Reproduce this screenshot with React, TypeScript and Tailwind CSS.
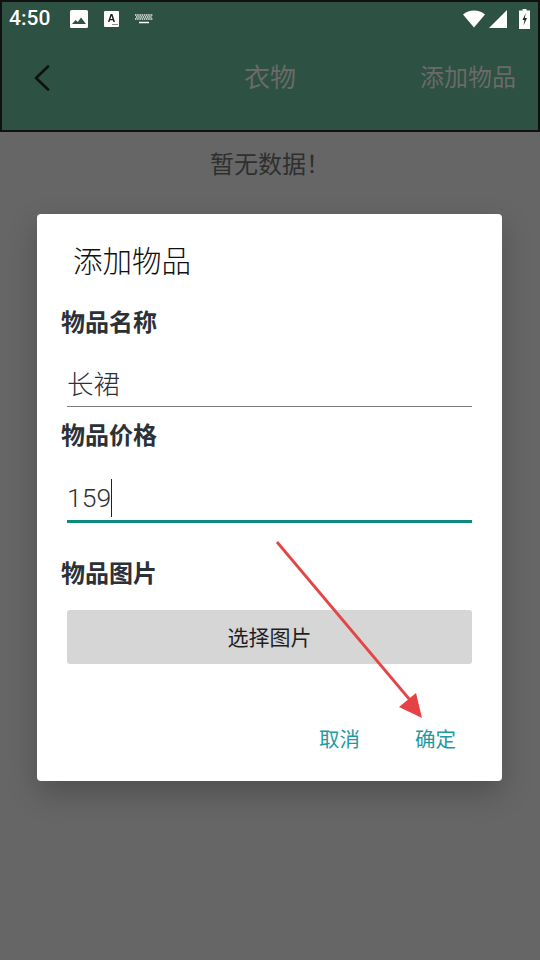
const FONT = "font-['Roboto','Noto_Sans_CJK_SC',sans-serif]"

function StatusBar() {
  return (
    <div className="flex h-[33px] items-center pl-[7px] pr-[8px] text-white">
      <span className="w-[52px] text-[21px] leading-none font-medium">4:50</span>
      <svg className="ml-[9px] h-[18px] w-[18px]" viewBox="0 0 18 18" aria-hidden="true">
        <rect width="18" height="18" rx="1.5" fill="#fff" />
        <path d="M2 14l3.6-4 2.2 2 3.2-4.4L16 14z" fill="#2d5142" />
      </svg>
      <svg className="ml-[16px] h-[16px] w-[15px]" viewBox="0 0 15 16" aria-hidden="true">
        <rect width="15" height="16" rx="1" fill="#fff" />
        <path d="M4 11l2.6-8h1.8L11 11H9.400l-.5-1.700H6L5.500 11zM6.400 8h2.100l-1-3.300z" fill="#1a1a1a" />
        <path d="M8.500 13.500h1M10.500 13.500h1M12.500 13.500h1" stroke="#1a1a1a" strokeWidth="1" />
      </svg>
      <svg className="ml-[16px] h-[10px] w-[18px]" viewBox="0 0 18 10" aria-hidden="true">
        <path d="M0 1h18M1 3h16M0 5h18" stroke="#e8eeeb" strokeWidth="1.400" strokeDasharray="1.500 0.700" />
        <path d="M4 8.500h10" stroke="#fff" strokeWidth="1.500" />
      </svg>
      <div className="flex-1" />
      <svg className="h-[18px] w-[22px]" viewBox="0 0 22 18" aria-hidden="true">
        <path d="M0 4.500C3 1.800 6.800 0.500 11 0.500s8 1.300 11 4L11 17.500z" fill="#fff" />
      </svg>
      <svg className="ml-[4px] h-[18px] w-[18px]" viewBox="0 0 18 18" aria-hidden="true">
        <path d="M18 0v18H0z" fill="#fff" />
      </svg>
      <svg className="ml-[12px] h-[20px] w-[11px]" viewBox="0 0 11 20" aria-hidden="true">
        <path d="M3.500 0h4v1.500H11V20H0V1.500h3.500z" fill="#fff" />
        <path d="M6.800 4L3.500 11h2l-1 5.500L8 9H5.800z" fill="#1f2b26" />
      </svg>
    </div>
  )
}

function Field({ label, value, focused }: { label: string; value: string; focused?: boolean }) {
  return (
    <div>
      <div className="pl-[24px] text-[24px] leading-[34px] font-bold text-[#2c3138]">{label}</div>
      <div className="ml-[30px] mr-[30px] mt-[28px]">
        <div className="flex h-[34px] items-center text-[26.500px] leading-none font-light text-[#2c3138]">
          {value}
          {focused && <span className="h-[38px] w-[1px] bg-[#222]" />}
        </div>
        <div className={focused ? 'mt-[5px] h-[3px] bg-[#0c8a80]' : 'mt-[4px] h-[1px] bg-[#7c7c7c]'} />
      </div>
    </div>
  )
}

export default function App() {
  return (
    <div className={`relative flex h-[960px] w-[540px] flex-col overflow-hidden bg-[#666666] ${FONT}`}>
      <header className="h-[132px] flex-none border-2 border-[#111] bg-[#2d5142]">
        <StatusBar />
        <div className="relative flex h-[86px] items-center">
          <svg className="ml-[31px] h-[26px] w-[18px]" viewBox="0 0 18 26" aria-hidden="true">
            <path d="M15 1.500L3 13l12 11.500" fill="none" stroke="#111" strokeWidth="2.600" strokeLinecap="round" strokeLinejoin="round" />
          </svg>
          <span className="absolute left-[242px] text-[26px] text-[#6a6a6a]">衣物</span>
          <span className="ml-auto mr-[22px] text-[24px] text-[#6a6a6a]">添加物品</span>
        </div>
      </header>

      <div className="mt-[18px] text-center text-[24px] leading-[30px] text-[#2f2f2f]">暂无数据！</div>

      <div className="ml-[37px] mt-[34px] h-[567px] w-[465px] rounded-[4px] bg-white shadow-[0_12px_30px_rgba(0,0,0,0.22)]">
        <div className="pl-[36px] pt-[27px] text-[29.500px] leading-[42px] font-light text-[#111]">添加物品</div>
        <div className="mt-[23px] flex flex-col gap-[12px]">
          <Field label="物品名称" value="长裙" />
          <Field label="物品价格" value="159" focused />
        </div>
        <div className="mt-[34px] pl-[24px] text-[24px] leading-[34px] font-bold text-[#2c3138]">物品图片</div>
        <button className="ml-[30px] mt-[19px] flex h-[54px] w-[405px] items-center justify-center rounded-[3px] bg-[#d6d6d6] pt-[3px] text-[21px] text-[#1f1f1f]">
          选择图片
        </button>
        <div className="mr-[46px] mt-[59px] flex justify-end gap-[55px] text-[20.500px] leading-[34px] text-[#1f9aa0]">
          <span>取消</span>
          <span>确定</span>
        </div>
      </div>

      {/* red annotation arrow */}
      <svg className="pointer-events-none absolute left-0 top-0 h-[960px] w-[540px]" viewBox="0 0 540 960" aria-hidden="true">
        <path d="M277 542L410 700" stroke="#e54545" strokeWidth="2.800" fill="none" />
        <path d="M399 707L416 693L422 718z" fill="#e54245" />
      </svg>
    </div>
  )
}
